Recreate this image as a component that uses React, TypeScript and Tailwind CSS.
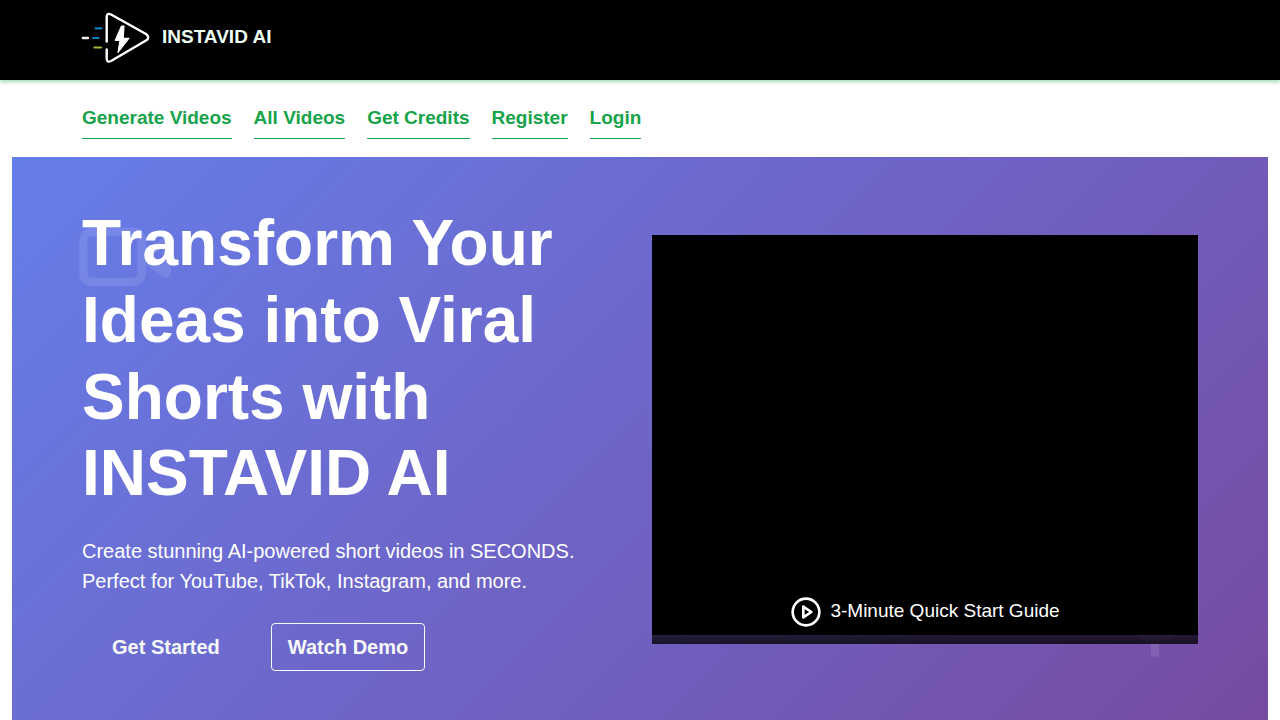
import React from "react";

const links = ["Generate Videos", "All Videos", "Get Credits", "Register", "Login"];

function Logo() {
  return (
    <svg viewBox="0 0 80 65" className="h-[65px] w-20" fill="none" strokeLinecap="round" aria-hidden="true">
      <path
        d="M30.700 36.500V11.500Q31 7.500 35 9.500L70 29Q74.500 32.500 70 35.500L35 56Q31 58 30.700 54V44.500"
        stroke="#fff"
        strokeWidth="2.400"
        strokeLinejoin="round"
      />
      <path
        d="M45.500 21L39.300 35.300H44L42 47.500L52.800 33.300H47.200L48 21Z"
        fill="#fff"
        stroke="#fff"
        strokeWidth="1.200"
        strokeLinejoin="round"
      />
      <path d="M19.500 23.300H25.500M17 33H22.500" stroke="#0d7fc0" strokeWidth="2.200" />
      <path d="M6.800 33H12" stroke="#f1f1ea" strokeWidth="2.400" />
      <path d="M18.500 42.500H25" stroke="#a2b73a" strokeWidth="2.200" />
    </svg>
  );
}

function CameraIcon() {
  return (
    <svg
      viewBox="0 0 24 24"
      className="absolute top-[50px] left-[5%] size-[100px] opacity-10"
      fill="none"
      stroke="#fff"
      strokeWidth="2"
      strokeLinecap="round"
      strokeLinejoin="round"
      aria-hidden="true"
    >
      <path d="m22 8-6 4 6 4V8Z" />
      <rect width="14" height="12" x="2" y="6" rx="2" />
    </svg>
  );
}

function StandIcon() {
  return (
    <svg
      viewBox="0 0 34 60"
      className="absolute right-[96px] bottom-[64px] h-[60px] w-[34px] opacity-10"
      fill="none"
      stroke="#fff"
      strokeWidth="8"
      strokeLinecap="round"
      aria-hidden="true"
    >
      <path d="M4 38H30M17 38V55" />
    </svg>
  );
}

function PlayIcon() {
  return (
    <svg
      viewBox="0 0 24 24"
      className="size-8"
      fill="none"
      stroke="currentColor"
      strokeWidth="2"
      strokeLinecap="round"
      strokeLinejoin="round"
      aria-hidden="true"
    >
      <circle cx="12" cy="12" r="10" />
      <polygon points="10 8 16 12 10 16 10 8" />
    </svg>
  );
}

export default function App() {
  return (
    <div className="bg-white font-['Liberation_Sans',Arial,sans-serif]">
      <header className="h-20 bg-black shadow-[0_2px_4px_rgba(22,163,74,0.4)]">
        <div className="mx-auto flex max-w-[1140px] px-1.5 pt-[5px]">
          <a href="#home" className="flex items-center gap-1.5 text-[19px] font-bold text-[#eefff4]">
            <Logo />
            <span>INSTAVID AI</span>
          </a>
        </div>
      </header>

      <nav className="mx-auto flex max-w-[1140px] flex-wrap gap-x-[22px] px-3 pt-6 pb-[18px]">
        {links.map((label) => (
          <a
            key={label}
            href="#"
            className="border-b border-[#16a34a] pb-1.5 text-[19px] leading-7 font-bold text-[#16a34a]"
          >
            {label}
          </a>
        ))}
      </nav>

      <main className="px-3">
        <section className="relative overflow-hidden bg-[linear-gradient(135deg,#667eea_0%,#764ba2_100%)] py-12">
          <CameraIcon />
          <StandIcon />

          <div className="relative mx-auto grid max-w-[1140px] grid-cols-1 items-center md:grid-cols-2">
            <div className="px-3">
              <h1 className="mb-6 text-[64px] leading-[1.2] font-bold text-white">
                Transform Your Ideas into Viral Shorts with INSTAVID AI
              </h1>
              <p className="mb-[27px] text-xl leading-[30px] text-white">
                Create stunning AI-powered short videos in SECONDS. Perfect for YouTube, TikTok, Instagram, and more.
              </p>
              <div className="flex gap-[21px] pb-[3px] text-xl leading-[30px] font-bold text-[#f8f9fa]">
                <button type="button" className="px-[30px] py-2">
                  Get Started
                </button>
                <button type="button" className="rounded border border-[#f8f9fa] px-4 py-2">
                  Watch Demo
                </button>
              </div>
            </div>

            <div className="px-3">
              <div className="relative aspect-[4/3]">
                <div className="h-[400px] bg-black" />
                <button
                  type="button"
                  className="absolute inset-x-0 bottom-0 flex items-center justify-center gap-2 bg-[linear-gradient(to_top,rgba(0,0,0,0.8),transparent)] p-4 text-[19px] leading-[30px] text-white"
                >
                  <PlayIcon />
                  <span className="pb-0.5">3-Minute Quick Start Guide</span>
                </button>
              </div>
            </div>
          </div>
        </section>
      </main>
    </div>
  );
}
